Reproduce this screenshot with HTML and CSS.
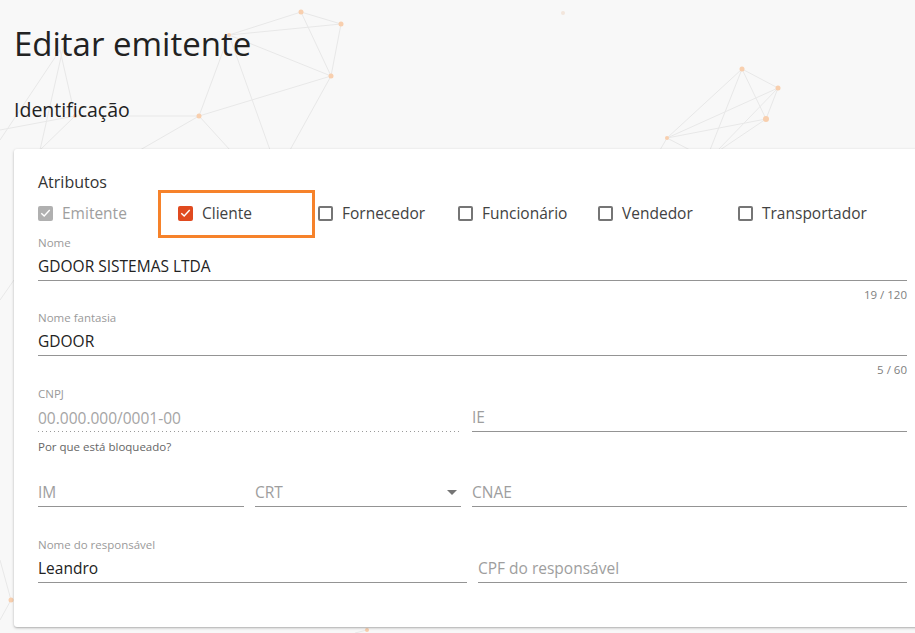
FILE: index.html
```html
<!DOCTYPE html>
<html lang="pt-BR">
<head>
<meta charset="utf-8">
<title>Editar emitente</title>
<link rel="stylesheet" href="styles.css">
</head>
<body>
<svg class="bg-network" width="915" height="633" viewBox="0 0 915 633" aria-hidden="true">
  <g class="net-lines">
    <line x1="301" y1="12" x2="341" y2="24"/>
    <line x1="301" y1="12" x2="331" y2="76"/>
    <line x1="341" y1="24" x2="331" y2="76"/>
    <line x1="229" y1="35" x2="341" y2="24"/>
    <line x1="229" y1="35" x2="331" y2="76"/>
    <line x1="229" y1="35" x2="301" y2="12"/>
    <line x1="229" y1="35" x2="199" y2="116"/>
    <line x1="229" y1="35" x2="270" y2="150"/>
    <line x1="331" y1="76" x2="199" y2="116"/>
    <line x1="331" y1="76" x2="290" y2="150"/>
    <line x1="199" y1="116" x2="75" y2="116"/>
    <line x1="199" y1="116" x2="140" y2="150"/>
    <line x1="199" y1="116" x2="230" y2="150"/>
    <line x1="75" y1="116" x2="60" y2="50"/>
    <line x1="75" y1="116" x2="0" y2="130"/>
    <line x1="75" y1="116" x2="40" y2="150"/>
    <line x1="60" y1="50" x2="0" y2="140"/>
    <line x1="66" y1="35" x2="40" y2="150"/>
    <line x1="742" y1="69" x2="778" y2="88"/>
    <line x1="742" y1="69" x2="766" y2="119"/>
    <line x1="778" y1="88" x2="766" y2="119"/>
    <line x1="742" y1="69" x2="667" y2="138"/>
    <line x1="778" y1="88" x2="667" y2="138"/>
    <line x1="766" y1="119" x2="667" y2="138"/>
    <line x1="742" y1="69" x2="710" y2="150"/>
    <line x1="778" y1="88" x2="718" y2="150"/>
    <line x1="766" y1="119" x2="720" y2="150"/>
    <line x1="667" y1="138" x2="660" y2="150"/>
    <line x1="667" y1="138" x2="690" y2="150"/>
    <line x1="11" y1="600" x2="0" y2="560"/>
    <line x1="11" y1="600" x2="0" y2="620"/>
    <line x1="0" y1="300" x2="14" y2="280"/>
    <line x1="367" y1="630" x2="355" y2="633"/>
  </g>
  <g class="net-dots">
    <circle cx="301" cy="12" r="2.5"/>
    <circle cx="341" cy="24" r="2.5"/>
    <circle cx="331" cy="76" r="2.5"/>
    <circle cx="229" cy="35" r="2"/>
    <circle cx="199" cy="116" r="2.5"/>
    <circle cx="75" cy="116" r="2"/>
    <circle cx="742" cy="69" r="2.5"/>
    <circle cx="778" cy="88" r="2.5"/>
    <circle cx="766" cy="119" r="3"/>
    <circle cx="667" cy="138" r="2"/>
    <circle cx="563" cy="13" r="2" class="faint"/>
    <circle cx="11" cy="600" r="2.5"/>
    <circle cx="367" cy="630" r="2"/>
  </g>
</svg>

<main class="page">
  <h1 class="title">Editar emitente</h1>
  <h2 class="section-title">Identificação</h2>

  <section class="card">
    <div class="attr-title">Atributos</div>
    <div class="attr-row">
      <label class="check disabled">
        <span class="box checked grey">
          <svg viewBox="0 0 16 16" width="16" height="16"><path d="M3.5 8.2 6.6 11.2 12.5 4.8"/></svg>
        </span>
        <span class="check-label">Emitente</span>
      </label>
      <label class="check highlighted">
        <span class="box checked orange">
          <svg viewBox="0 0 16 16" width="16" height="16"><path d="M3.5 8.2 6.6 11.2 12.5 4.8"/></svg>
        </span>
        <span class="check-label">Cliente</span>
        <span class="highlight-frame"></span>
      </label>
      <label class="check"><span class="box"></span><span class="check-label">Fornecedor</span></label>
      <label class="check"><span class="box"></span><span class="check-label">Funcionário</span></label>
      <label class="check"><span class="box"></span><span class="check-label">Vendedor</span></label>
      <label class="check"><span class="box"></span><span class="check-label">Transportador</span></label>
    </div>

    <div class="field">
      <div class="label">Nome</div>
      <div class="control"><span class="value">GDOOR SISTEMAS LTDA</span></div>
      <div class="hint right">19 / 120</div>
    </div>

    <div class="field">
      <div class="label">Nome fantasia</div>
      <div class="control"><span class="value">GDOOR</span></div>
      <div class="hint right">5 / 60</div>
    </div>

    <div class="grid3">
      <div class="field span2">
        <div class="label">CNPJ</div>
        <div class="control dotted"><span class="value muted">00.000.000/0001-00</span></div>
        <div class="hint dark">Por que está bloqueado?</div>
      </div>
      <div class="field">
        <div class="label"></div>
        <div class="control"><span class="placeholder">IE</span></div>
      </div>

      <div class="field">
        <div class="label"></div>
        <div class="control"><span class="placeholder">IM</span></div>
      </div>
      <div class="field">
        <div class="label"></div>
        <div class="control select"><span class="placeholder">CRT</span><span class="arrow"></span></div>
      </div>
      <div class="field">
        <div class="label"></div>
        <div class="control"><span class="placeholder">CNAE</span></div>
      </div>
    </div>

    <div class="grid2">
      <div class="field">
        <div class="label">Nome do responsável</div>
        <div class="control"><span class="value">Leandro</span></div>
      </div>
      <div class="field">
        <div class="label"></div>
        <div class="control"><span class="placeholder">CPF do responsável</span></div>
      </div>
    </div>
  </section>
</main>
</body>
</html>
```

FILE: styles.css
```css
* { box-sizing: border-box; }

html, body {
  margin: 0;
  padding: 0;
  width: 915px;
  height: 633px;
  overflow: hidden;
}

body {
  background: #f8f8f8;
  font-family: "Open Sans", "Noto Sans", "Liberation Sans", sans-serif;
  color: #333;
  position: relative;
}

.bg-network {
  position: absolute;
  left: 0;
  top: 0;
  z-index: 0;
}
.net-lines line {
  stroke: #e8e8e8;
  stroke-width: 1;
}
.net-dots circle {
  fill: #f8cfae;
}
.net-dots circle.faint { fill: #f3e6dc; }

.page {
  position: relative;
  z-index: 1;
  padding: 24px 0 0 14px;
}

.title {
  margin: 0;
  font-size: 33px;
  font-weight: 400;
  line-height: 40px;
  color: #222;
}

.section-title {
  margin: 34px 0 0 0;
  font-size: 19.5px;
  font-weight: 400;
  line-height: 24px;
  color: #222;
}

.card {
  margin-top: 27px;
  width: 917px;
  background: #fff;
  border-radius: 3px;
  box-shadow: 0 1px 3px rgba(0,0,0,0.25), 0 1px 1px rgba(0,0,0,0.08);
  padding: 23px 24px 14px 24px;
}

.attr-title {
  font-size: 16px;
  line-height: 20px;
  color: #333;
}

.attr-row {
  display: flex;
  margin-top: 9px;
  height: 24px;
}

.check {
  position: relative;
  width: 140px;
  display: flex;
  align-items: center;
  gap: 9px;
  font-size: 15.5px;
  color: #424242;
}
.check.disabled { color: #9e9e9e; }

.box {
  width: 15px;
  height: 15px;
  border: 2px solid #757575;
  border-radius: 2px;
  display: flex;
  align-items: center;
  justify-content: center;
  flex: none;
}
.box.checked { border: none; }
.box.grey { background: #b0b0b0; }
.box.orange { background: #e04a1f; }
.box svg path {
  fill: none;
  stroke: #fff;
  stroke-width: 1.5;
}

.highlight-frame {
  position: absolute;
  left: -20px;
  top: -11px;
  width: 157px;
  height: 48px;
  border: 3px solid #f6822a;
  pointer-events: none;
}

.field {
  margin-top: 11px;
}
.field + .field { margin-top: 9px; }

.label {
  height: 14px;
  line-height: 14px;
  font-size: 11.5px;
  color: #9a9a9a;
}

.control {
  height: 31px;
  padding-top: 2px;
  line-height: 28px;
  font-size: 15.5px;
  border-bottom: 1px solid #949494;
  display: flex;
  align-items: center;
  white-space: nowrap;
}
.control.dotted {
  border-bottom: none;
  background-image: linear-gradient(to right, #9a9a9a 0 1px, transparent 1px);
  background-size: 4px 1px;
  background-repeat: repeat-x;
  background-position: left bottom;
}

.value { color: #222; }
.value.muted { color: #a5a5a5; }
.placeholder { color: #9e9e9e; }

.select { position: relative; }
.arrow {
  position: absolute;
  right: 4px;
  top: 14px;
  width: 0;
  height: 0;
  border-left: 5px solid transparent;
  border-right: 5px solid transparent;
  border-top: 5px solid #757575;
}

.hint {
  height: 14px;
  line-height: 14px;
  margin-top: 7px;
  font-size: 11.5px;
  color: #808080;
}
.hint.right { text-align: right; }
.hint.dark { color: #666; margin-top: 8px; }

.grid3 {
  display: grid;
  grid-template-columns: 206px 206px 1fr;
  column-gap: 11px;
  row-gap: 8px;
  margin-top: 10px;
}
.grid3 .field,
.grid2 .field { margin-top: 0; }
.span2 { grid-column: span 2; }

.grid2 {
  display: grid;
  grid-template-columns: 1fr 1fr;
  column-gap: 11px;
  margin-top: 31px;
  padding-bottom: 30px;
}
```
